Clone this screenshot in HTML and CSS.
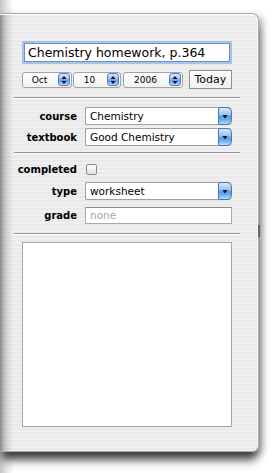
FILE: index.html
```html
<!DOCTYPE html>
<html>
<head>
<meta charset="utf-8">
<link rel="stylesheet" href="styles.css">
</head>
<body>
<div class="drawer">
  <div class="grip"></div>
  <section class="sec head">
    <div class="title-field">Chemistry homework, p.364</div>
    <div class="date-row">
      <div class="stepbox w-oct"><span class="val">Oct</span><span class="stepper"><svg width="6" height="10" viewBox="0 0 6 10"><path d="M3 1 L5.5 4 L0.5 4 Z M3 9 L5.5 6 L0.5 6 Z" fill="#111"/></svg></span></div>
      <div class="stepbox w-day"><span class="val">10</span><span class="stepper"><svg width="6" height="10" viewBox="0 0 6 10"><path d="M3 1 L5.5 4 L0.5 4 Z M3 9 L5.5 6 L0.5 6 Z" fill="#111"/></svg></span></div>
      <div class="stepbox w-year"><span class="val">2006</span><span class="stepper"><svg width="6" height="10" viewBox="0 0 6 10"><path d="M3 1 L5.5 4 L0.5 4 Z M3 9 L5.5 6 L0.5 6 Z" fill="#111"/></svg></span></div>
      <div class="today">Today</div>
    </div>
  </section>
  <hr class="sep">
  <section class="sec form s2">
    <label class="lbl">course</label>
    <div class="popup"><span class="ptext">Chemistry</span><span class="parrow"><svg width="6" height="5" viewBox="0 0 6 5"><path d="M0.5 1 L5.5 1 L3 4.5 Z" fill="#111"/></svg></span></div>
    <label class="lbl">textbook</label>
    <div class="popup"><span class="ptext">Good Chemistry</span><span class="parrow"><svg width="6" height="5" viewBox="0 0 6 5"><path d="M0.5 1 L5.5 1 L3 4.5 Z" fill="#111"/></svg></span></div>
  </section>
  <hr class="sep s2sep">
  <section class="sec form s3">
    <label class="lbl">completed</label>
    <div class="checkcell"><span class="check"></span></div>
    <label class="lbl">type</label>
    <div class="popup"><span class="ptext">worksheet</span><span class="parrow"><svg width="6" height="5" viewBox="0 0 6 5"><path d="M0.5 1 L5.5 1 L3 4.5 Z" fill="#111"/></svg></span></div>
    <label class="lbl lbl-grade">grade</label>
    <div class="field"><span class="placeholder">none</span></div>
  </section>
  <hr class="sep s3sep">
  <section class="sec notes">
    <div class="textarea"></div>
  </section>
</div>
</body>
</html>
```

FILE: styles.css
```css
html, body {
  margin: 0;
  padding: 0;
}
body {
  width: 273px;
  height: 473px;
  overflow: hidden;
  background: linear-gradient(to right, #c4c4c4 0px, #ececec 8px, #ffffff 14px);
  font-family: "DejaVu Sans", "Liberation Sans", sans-serif;
  color: #000;
}
.drawer {
  position: relative;
  box-sizing: border-box;
  margin-top: 13px;
  width: 259px;
  height: 439px;
  padding: 29px 18px 0 14px;
  border: 1px solid #a9a9a9;
  border-left: none;
  border-radius: 0 7px 7px 0;
  background:
    linear-gradient(to right, rgba(60,60,60,0.55) 0px, rgba(90,90,90,0.25) 5px, rgba(255,255,255,0) 13px),
    repeating-linear-gradient(to bottom, #efefef 0px, #efefef 2px, #e9e9e9 2px, #e9e9e9 4px);
  box-shadow: inset 0 1px 0 #fbfbfb, inset -1px 0 0 #fbfbfb, 0 10px 10px -2px rgba(0,0,0,0.7), 4px 3px 7px rgba(0,0,0,0.28);
}
.grip {
  position: absolute;
  right: -2px;
  top: 211px;
  width: 2px;
  height: 12px;
  background: #666;
}
.sec {
  margin: 0;
}
.head {
  padding: 0 8px;
}
.title-field {
  box-sizing: border-box;
  margin: 0 2px;
  height: 19px;
  border: 1px solid #6f8fc4;
  box-shadow: 0 0 0 2px #a8c3ea;
  background: #fff;
  font-size: 12.5px;
  line-height: 17px;
  padding-left: 3px;
  white-space: nowrap;
}
.date-row {
  margin-top: 8px;
  height: 19px;
  display: flex;
  align-items: center;
}
.stepbox {
  box-sizing: border-box;
  height: 16px;
  display: flex;
  align-items: center;
  border: 1px solid #a3a3a3;
  border-radius: 3px;
  background: linear-gradient(#ffffff, #f1f1f1);
  font-size: 9px;
  padding-right: 1px;
}
.w-oct { width: 51px; }
.w-day { width: 49px; margin-left: 1px; }
.w-year { width: 61px; margin-left: 2px; }
.stepbox .val {
  flex: 1;
  text-align: center;
  padding-right: 2px;
}
.stepper {
  box-sizing: border-box;
  width: 12px;
  height: 13px;
  border-radius: 3px;
  border: 1px solid #5c80b8;
  background: linear-gradient(#d4e8fc 0%, #94c4f3 45%, #5c9fe6 55%, #a6d6fd 100%);
  display: flex;
  align-items: center;
  justify-content: center;
}
.today {
  box-sizing: border-box;
  margin-left: 6px;
  width: 44px;
  height: 19px;
  border: 1px solid #8e8e8e;
  background: linear-gradient(#fdfdfd, #efefef);
  font-size: 11px;
  line-height: 17px;
  text-align: center;
}
.sep {
  margin: 8px 0 0 0;
  height: 0;
  border: none;
  border-top: 1px solid #959595;
  border-bottom: 1px solid #fafafa;
}
.form {
  display: grid;
  grid-template-columns: 63px 147px;
  column-gap: 8px;
  align-items: center;
}
.s2 {
  margin-top: 8px;
  row-gap: 3px;
}
.s2sep {
  margin-top: 6px;
}
.s3 {
  margin-top: 6px;
  grid-template-rows: 18px 18px 20px;
  row-gap: 4px;
}
.s3 .field { align-self: end; }
.s3 .lbl-grade { align-self: end; line-height: 17px; }
.s3sep {
  margin-top: 9px;
}
.lbl {
  font-weight: bold;
  font-size: 10px;
  text-align: right;
  white-space: nowrap;
}
.popup {
  box-sizing: border-box;
  height: 18px;
  display: flex;
  align-items: stretch;
  border: 1px solid #a0a0a0;
  border-right: none;
  border-radius: 2px 4px 4px 2px;
  background: #fff;
}
.ptext {
  flex: 1;
  font-size: 10.5px;
  line-height: 16px;
  padding-left: 4px;
  white-space: nowrap;
}
.parrow {
  box-sizing: border-box;
  width: 14px;
  margin-top: -1px;
  margin-bottom: -1px;
  border: 1px solid #4e74ad;
  border-radius: 2px 5px 5px 2px;
  background: linear-gradient(#d6eafd 0%, #97c6f4 40%, #5499e4 55%, #78b7f6 80%, #b6e0ff 100%);
  display: flex;
  align-items: center;
  justify-content: center;
}
.checkcell {
  display: flex;
  align-items: center;
  height: 18px;
}
.check {
  box-sizing: border-box;
  margin-left: 1px;
  width: 11px;
  height: 11px;
  border: 1px solid #8a8a8a;
  border-radius: 2px;
  background: linear-gradient(#fdfdfd, #e3e3e3);
}
.field {
  box-sizing: border-box;
  height: 17px;
  border: 1px solid #a9a9a9;
  border-top-color: #8c8c8c;
  background: #fff;
  font-size: 10.5px;
  line-height: 15px;
  padding-left: 4px;
}
.placeholder {
  color: #a6a6a6;
}
.notes {
  padding: 0 8px;
  margin-top: 7px;
}
.textarea {
  box-sizing: border-box;
  height: 185px;
  border: 1px solid #a5a5a5;
  background: #fff;
}
```
